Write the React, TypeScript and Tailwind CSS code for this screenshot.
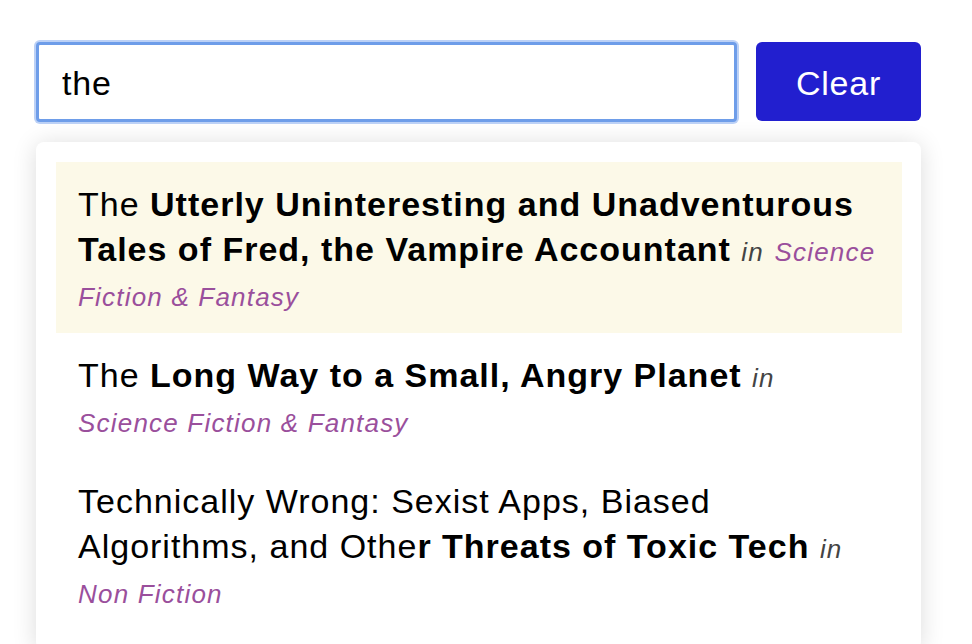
import { useState } from 'react';

interface Book {
    plain: string;
    bold: string;
    category: string;
}

const books: Book[] = [
    {
        plain: 'The ',
        bold: 'Utterly Uninteresting and Unadventurous Tales of Fred, the Vampire Accountant',
        category: 'Science Fiction & Fantasy',
    },
    {
        plain: 'The ',
        bold: 'Long Way to a Small, Angry Planet',
        category: 'Science Fiction & Fantasy',
    },
    {
        plain: 'Technically Wrong: Sexist Apps, Biased Algorithms, and Othe',
        bold: 'r Threats of Toxic Tech',
        category: 'Non Fiction',
    },
];

export default function App() {
    const [query, setQuery] = useState('the');
    const [active, setActive] = useState(0);

    return (
        <div className="min-h-screen bg-white pl-[36px] pr-[51px] pt-[42px] font-['Liberation_Sans',Arial,sans-serif] text-black">
            <div className="flex gap-[19px]">
                <input
                    type="text"
                    value={query}
                    onChange={(e) => setQuery(e.target.value)}
                    className="h-[80px] flex-1 rounded-[4px] border-[3px] border-[#6e9de9] bg-white px-[23px] pt-[2px] text-[34px] tracking-[0.8px] shadow-[0_0_0_2px_#bcd1f6] outline-none"
                />
                <button
                    type="button"
                    onClick={() => setQuery('')}
                    className="h-[79px] w-[165px] rounded-[6px] bg-[#221fcf] pt-[3px] text-[34px] tracking-[0.8px] text-white"
                >
                    Clear
                </button>
            </div>

            <ul className="mt-[20px] rounded-[8px] bg-white p-[20px] pr-[19px] shadow-[0_2px_24px_rgba(0,0,0,0.14)]">
                {books.map((book, i) => (
                    <li
                        key={i}
                        onMouseEnter={() => setActive(i)}
                        className={
                            'px-[22px] pt-[20px] pb-[16px] text-[34px] leading-[45px] tracking-[1px] ' +
                            (active === i ? 'bg-[#fcf9e8]' : '')
                        }
                    >
                        {book.plain}
                        <strong className="font-bold">{book.bold}</strong>{' '}
                        <em className="text-[26px] leading-none tracking-[1.2px] text-[#444]">in</em>{' '}
                        <em className="text-[26px] leading-none tracking-[1.2px] text-[#9a4f9c]">
                            {book.category}
                        </em>
                    </li>
                ))}
            </ul>
        </div>
    );
}
